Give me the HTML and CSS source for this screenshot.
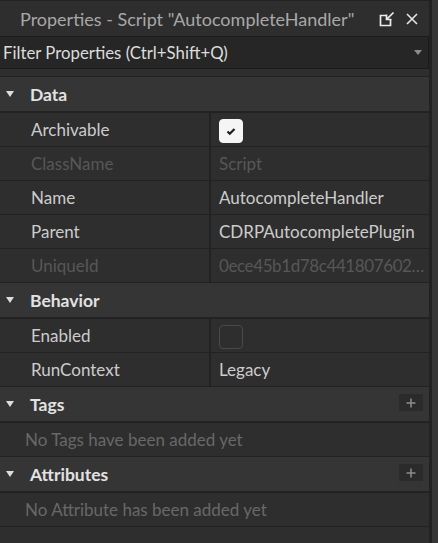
FILE: index.html
```html
<!DOCTYPE html>
<html>
<head>
<meta charset="utf-8">
<link rel="stylesheet" href="styles.css">
</head>
<body>
<div class="app">
  <div class="panel">
    <div class="titlebar">
      <span class="title">Properties - Script "AutocompleteHandler"</span>
      <div class="title-icons">
        <svg class="ico" width="16" height="16" viewBox="0 0 16 16">
          <path d="M7 4.5H1.5V14.5H11.5V9" fill="none" stroke="#ececec" stroke-width="1.7"/>
          <path d="M14.5 1.5L7.5 8.5M7.5 3.5V8.5H12.5" fill="none" stroke="#ececec" stroke-width="1.7"/>
        </svg>
        <svg class="ico" width="14" height="14" viewBox="0 0 14 14">
          <path d="M2 2L12 12M12 2L2 12" stroke="#e6e6e6" stroke-width="1.6"/>
        </svg>
      </div>
    </div>
    <div class="filter">
      <span class="filter-text">Filter Properties (Ctrl+Shift+Q)</span>
      <span class="filter-arrow"></span>
    </div>
    <div class="props">
      <div class="cat"><span class="tri"></span><span class="cat-name">Data</span></div>
      <div class="row"><div class="name">Archivable</div><div class="val"><span class="cb checked"><svg width="14" height="14" viewBox="0 0 14 14"><path d="M3.5 7.5L5.8 9.8L10.5 5" fill="none" stroke="#1e1e1e" stroke-width="2.2"/></svg></span></div></div>
      <div class="row"><div class="name dis">ClassName</div><div class="val dis">Script</div></div>
      <div class="row"><div class="name">Name</div><div class="val">AutocompleteHandler</div></div>
      <div class="row"><div class="name">Parent</div><div class="val">CDRPAutocompletePlugin</div></div>
      <div class="row"><div class="name dis">UniqueId</div><div class="val dis uid">0ece45b1d78c441807602…</div></div>
      <div class="cat"><span class="tri"></span><span class="cat-name">Behavior</span></div>
      <div class="row"><div class="name">Enabled</div><div class="val"><span class="cb"></span></div></div>
      <div class="row"><div class="name">RunContext</div><div class="val">Legacy</div></div>
      <div class="cat"><span class="tri"></span><span class="cat-name">Tags</span><span class="plus"><svg width="10" height="10" viewBox="0 0 10 10"><path d="M5 0.5V9.5M0.5 5H9.5" stroke="#8e8e8e" stroke-width="1.5"/></svg></span></div>
      <div class="empty">No Tags have been added yet</div>
      <div class="cat"><span class="tri"></span><span class="cat-name">Attributes</span><span class="plus"><svg width="10" height="10" viewBox="0 0 10 10"><path d="M5 0.5V9.5M0.5 5H9.5" stroke="#8e8e8e" stroke-width="1.5"/></svg></span></div>
      <div class="empty">No Attribute has been added yet</div>
    </div>
  </div>
  <div class="side"></div>
</div>
</body>
</html>
```
FILE: styles.css
```css
* { box-sizing: border-box; }
html, body { margin: 0; padding: 0; }
body {
  background: #2e2e2e;
  font-family: "Lato", "Noto Sans", sans-serif;
  width: 438px;
  height: 543px;
  overflow: hidden;
}
.app {
  display: flex;
  height: 543px;
}
.panel {
  width: 432px;
  height: 543px;
  border-right: 3px solid #222222;
  border-top: 1px solid #222222;
  background: #2e2e2e;
  display: flex;
  flex-direction: column;
}
.side {
  flex: 1;
  background: #363636;
}
.titlebar {
  height: 35px;
  display: flex;
  align-items: center;
  padding-left: 20px;
  padding-right: 10px;
}
.title {
  color: #a8a8a8;
  font-size: 18px;
  flex: 1;
  white-space: nowrap;
}
.title-icons {
  display: flex;
  align-items: center;
  gap: 10px;
}
.ico { display: block; }
.filter {
  height: 33px;
  background: #262626;
  border: 1px solid #1b1b1b;
  border-left: none;
  display: flex;
  align-items: center;
  padding-left: 3px;
  padding-right: 6px;
}
.filter-text {
  color: #dcdcdc;
  font-size: 16.8px;
  flex: 1;
  white-space: nowrap;
}
.filter-arrow {
  width: 0; height: 0;
  border-left: 4.5px solid transparent;
  border-right: 4.5px solid transparent;
  border-top: 5px solid #8c8c8c;
}
.props {
  margin-top: 7px;
  border-top: 1px solid #222222;
}
.cat {
  height: 36px;
  background: #353535;
  border-bottom: 2px solid #222222;
  display: flex;
  align-items: center;
  padding-left: 6px;
  padding-right: 6px;
}
.tri {
  width: 0; height: 0;
  border-left: 4.5px solid transparent;
  border-right: 4.5px solid transparent;
  border-top: 6px solid #dddddd;
  margin-right: 16px;
}
.cat-name {
  color: #e2e2e2;
  font-weight: 700;
  font-size: 17.5px;
  flex: 1;
}
.plus {
  width: 24px;
  height: 17px;
  background: #2b2b2b;
  display: flex;
  align-items: center;
  justify-content: center;
  align-self: flex-start;
  margin-top: 7px;
}
.plus svg { display: block; }
.row {
  height: 34px;
  display: grid;
  grid-template-columns: 211px 1fr;
  border-bottom: 1px solid #222222;
  background: #2e2e2e;
}
.name {
  padding-left: 31px;
  display: flex;
  align-items: center;
  color: #cccccc;
  font-size: 17px;
  border-right: 2px solid #222222;
}
.val {
  padding-left: 8px;
  display: flex;
  align-items: center;
  color: #cccccc;
  font-size: 17px;
  white-space: nowrap;
}
.uid { letter-spacing: -0.4px; }
.dis { color: #575757; }
.cb {
  width: 24px;
  height: 24px;
  margin-top: 3px;
  border-radius: 4px;
  border: 1px solid #4a4a4a;
  display: flex;
  align-items: center;
  justify-content: center;
}
.cb.checked {
  background: #f5f5f5;
  border-color: #f5f5f5;
}
.empty {
  height: 34px;
  display: flex;
  align-items: center;
  padding-left: 25px;
  color: #686868;
  font-size: 17px;
  border-bottom: 1px solid #222222;
  background: #2e2e2e;
}
```
